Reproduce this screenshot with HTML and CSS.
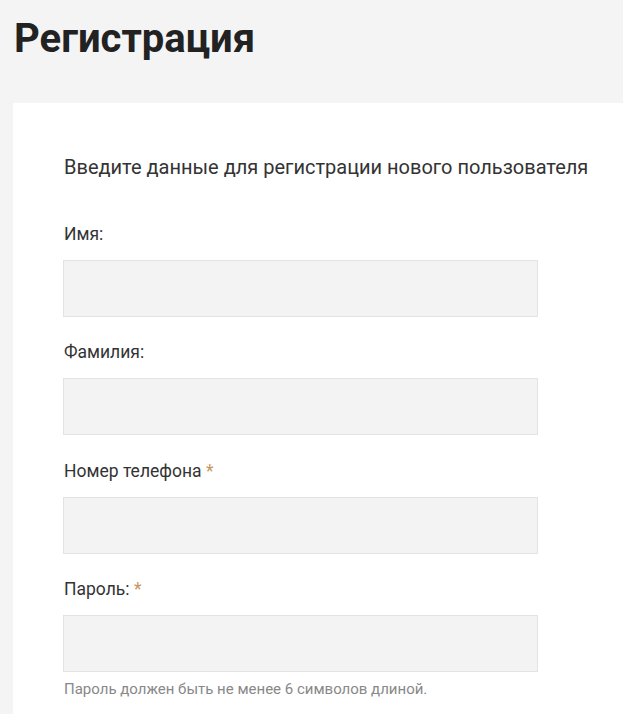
FILE: index.html
```html
<!DOCTYPE html>
<html lang="ru">
<head>
<meta charset="utf-8">
<title>Регистрация</title>
<link rel="stylesheet" href="styles.css">
</head>
<body>
<header class="page-head">
  <h1 class="page-title">Регистрация</h1>
</header>
<main class="card">
  <p class="intro">Введите данные для регистрации нового пользователя</p>
  <form class="form">
    <div class="field">
      <label class="label" for="f1">Имя:</label>
      <input class="input" id="f1" type="text">
    </div>
    <div class="field">
      <label class="label" for="f2">Фамилия:</label>
      <input class="input" id="f2" type="text">
    </div>
    <div class="field">
      <label class="label" for="f3">Номер телефона <span class="req">*</span></label>
      <input class="input" id="f3" type="text">
    </div>
    <div class="field">
      <label class="label" for="f4">Пароль: <span class="req">*</span></label>
      <input class="input" id="f4" type="password">
      <p class="hint">Пароль должен быть не менее 6 символов длиной.</p>
    </div>
  </form>
</main>
</body>
</html>
```
FILE: styles.css
```css
html, body {
  margin: 0;
  padding: 0;
}
body {
  background: #f4f4f4;
  font-family: Roboto, "Liberation Sans", sans-serif;
  color: #333;
  overflow: hidden;
}
.page-head {
  padding: 14px 0 0 14px;
  height: 103px;
  box-sizing: border-box;
}
.page-title {
  margin: 0;
  font-size: 40px;
  line-height: 50px;
  font-weight: 700;
  color: #222;
}
.card {
  background: #fff;
  margin-left: 13px;
  padding: 50px 0 40px 50px;
  min-height: 700px;
}
.intro {
  margin: 0 0 40px 1px;
  font-size: 20px;
  line-height: 28px;
  color: #333;
}
.form {
  display: flex;
  flex-direction: column;
  gap: 22.4px;
}
.field {
  display: flex;
  flex-direction: column;
  width: 475px;
}
.label {
  display: block;
  height: 26px;
  overflow: visible;
  font-size: 17.5px;
  line-height: 26px;
  margin: 0 0 13px 1px;
  color: #333;
}
.req {
  color: #c8945c;
  line-height: 1;
}
.input {
  display: block;
  box-sizing: border-box;
  width: 475px;
  height: 57px;
  margin: 0;
  background: #f3f3f3;
  border: 1px solid #e3e3e3;
  border-radius: 0;
  outline: none;
}
.hint {
  margin: 7px 0 0 1px;
  font-size: 15px;
  line-height: 20px;
  color: #888;
}
```
